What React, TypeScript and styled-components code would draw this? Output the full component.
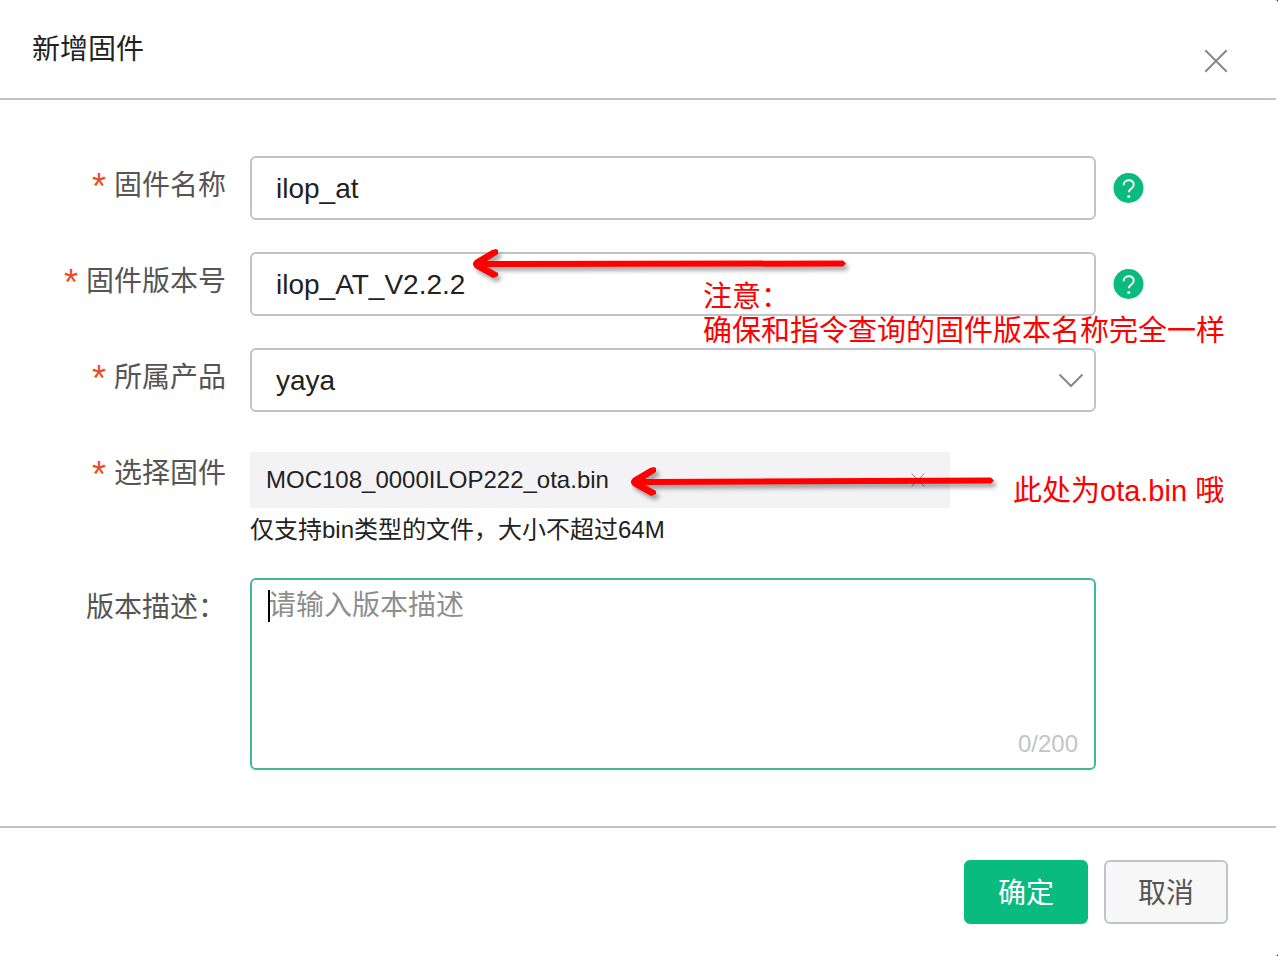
import React, { useState } from 'react';
import styled, { createGlobalStyle } from 'styled-components';

const line = '#bfc3cb';
const green = '#0abb80';
const ink = '#222';

const GlobalStyle = createGlobalStyle`
  *, *::before, *::after { box-sizing: border-box; }
  body {
    margin: 0;
    background: #333;
    color: ${ink};
    font-family: "Liberation Sans", "Noto Sans CJK SC", sans-serif;
    font-size: 28px;
    font-weight: 400;
  }
  button, input, select, textarea { font: inherit; color: inherit; }
`;

const Dialog = styled.form`
  min-height: 100vh;
  background: #fff;
  border-right: 2px solid #fff;
  border-radius: 0 3px 3px 0;
`;

const Header = styled.header`
  display: flex;
  justify-content: space-between;
  align-items: flex-start;
  height: 100px;
  padding: 30px 48px 0 32px;
  border-bottom: 2px solid ${line};
`;

const Title = styled.h1`
  margin: 0;
  font-size: 28px;
  font-weight: 400;
  line-height: 40px;
`;

const IconButton = styled.button`
  display: flex;
  padding: 0;
  border: 0;
  background: none;
  color: #888;
  cursor: pointer;
`;

const CloseButton = styled(IconButton)`
  margin-top: 19px;
`;

const Body = styled.main`
  display: flex;
  flex-direction: column;
  gap: 32px;
  padding: 56px 0;
`;

const Row = styled.div`
  display: flex;
  align-items: flex-start;
`;

const Label = styled.label`
  flex: none;
  width: 226px;
  margin-right: 24px;
  text-align: right;
  line-height: 60px;
  color: #555;
`;

const Required = styled.span`
  margin-right: 8px;
  color: #f04a25;
  font-size: 36px;
  line-height: 1;
  vertical-align: -4px;
`;

const Field = styled.div`
  position: relative;
  flex: 1;
  min-width: 0;
`;

const Aside = styled.div`
  flex: none;
  display: flex;
  align-items: center;
  width: 180px;
  height: 64px;
  padding-left: 17px;
`;

const TextInput = styled.input`
  display: block;
  width: 100%;
  height: 64px;
  padding: 2px 24px 0;
  border: 2px solid ${line};
  border-radius: 6px;
  outline: none;
  background: #fff;
  text-rendering: optimizeLegibility;
  font-kerning: normal;
`;

const Select = styled.select`
  display: block;
  width: 100%;
  height: 64px;
  padding: 0 24px;
  border: 2px solid ${line};
  border-radius: 6px;
  outline: none;
  background: #fff;
  appearance: none;
`;

const SelectArrow = styled.svg`
  position: absolute;
  top: 24px;
  right: 12px;
  pointer-events: none;
`;

const FileChip = styled.div`
  display: flex;
  align-items: center;
  justify-content: space-between;
  max-width: 700px;
  height: 56px;
  margin-top: 8px;
  padding: 0 24px 0 16px;
  background: #f3f3f6;
  font-size: 24px;
`;

const Hint = styled.p`
  margin: 6px 0 0;
  font-size: 24px;
  line-height: 32px;
`;

const FileInput = styled.input`
  display: none;
`;

const TextArea = styled.textarea`
  display: block;
  width: 100%;
  height: 192px;
  padding: 6px 16px;
  border: 2px solid #3dbb94;
  border-radius: 6px;
  outline: none;
  resize: none;
  line-height: 40px;
  caret-color: transparent;
  &::placeholder { color: #8e8e8e; opacity: 1; }
`;

const Caret = styled.span`
  position: absolute;
  top: 12px;
  left: 18px;
  width: 2px;
  height: 32px;
  background: #000;
`;

const Counter = styled.span`
  position: absolute;
  right: 18px;
  bottom: 10px;
  font-size: 24px;
  line-height: 32px;
  color: #c4c4c4;
`;

const Footer = styled.footer`
  display: flex;
  justify-content: flex-end;
  gap: 16px;
  padding: 32px 48px;
  border-top: 2px solid ${line};
`;

const Button = styled.button<{ $primary?: boolean }>`
  width: 124px;
  height: 64px;
  padding: 0 0 2px;
  border: 2px solid ${(p) => (p.$primary ? green : line)};
  border-radius: 6px;
  background: ${(p) => (p.$primary ? green : '#f7f7f7')};
  color: ${(p) => (p.$primary ? '#fff' : '#555')};
  cursor: pointer;
`;

const Note = styled.div<{ $x: number; $y: number }>`
  position: absolute;
  z-index: 2;
  left: ${(p) => p.$x}px;
  top: ${(p) => p.$y}px;
  color: #f00;
  font-size: 29px;
  line-height: 34px;
  white-space: nowrap;
  pointer-events: none;
`;

const ArrowSvg = styled.svg<{ $x: number; $y: number }>`
  position: absolute;
  z-index: 2;
  left: ${(p) => p.$x}px;
  top: ${(p) => p.$y}px;
  overflow: visible;
  pointer-events: none;
  filter: drop-shadow(3px 4px 2px rgba(0, 0, 0, 0.35));
`;

const Arrow = ({ x, y, length, rise }: { x: number; y: number; length: number; rise: number }) => (
  <ArrowSvg $x={x} $y={y} width={length} height="30" fill="#f00" aria-hidden="true">
    <path
      d={`M0 14 L2 11 L19 1 L23 0 L25 1 V5 L14 12 L${length - 3} ${11.5 - rise} L${length} ${14.5 - rise} L${length - 3} ${17.5 - rise} L14 18 L25 24 V27 L20 29 L2 19 L0 16 Z`}
    />
  </ArrowSvg>
);

const Cross = ({ size, weight }: { size: number; weight: number }) => (
  <svg width={size} height={size} viewBox={`0 0 ${size} ${size}`} fill="none" stroke="currentColor" strokeWidth={weight}>
    <path d={`M2 2 L${size - 2} ${size - 2} M${size - 2} 2 L2 ${size - 2}`} strokeLinecap="square" />
  </svg>
);

const HelpIcon = () => (
  <IconButton type="button" aria-label="帮助">
    <svg width="31" height="31" viewBox="0 0 31 31" fill="none">
      <circle cx="15.5" cy="15" r="15" fill={green} />
      <path
        d="M10.6 12.2c0-3 2.1-5 5-5 3 0 5.1 1.8 5.1 4.600 0 2-1 3-2.700 4.100-1.700 1.100-2.200 1.800-2.200 3.400"
        stroke="#fff"
        strokeWidth="1.9"
      />
      <circle cx="15.8" cy="23.5" r="1.5" fill="#fff" />
    </svg>
  </IconButton>
);

export default function App() {
  const [description, setDescription] = useState('');
  return (
    <>
      <GlobalStyle />
      <Dialog onSubmit={(e) => e.preventDefault()}>
        <Header>
          <Title>新增固件</Title>
          <CloseButton type="button" aria-label="关闭">
            <Cross size={24} weight={2} />
          </CloseButton>
        </Header>
        <Body>
          <Row>
            <Label htmlFor="name"><Required>*</Required>固件名称</Label>
            <Field><TextInput id="name" defaultValue="ilop_at" /></Field>
            <Aside><HelpIcon /></Aside>
          </Row>
          <Row>
            <Label htmlFor="version"><Required>*</Required>固件版本号</Label>
            <Field>
              <TextInput id="version" defaultValue="ilop_AT_V2.2.2" />
              <Arrow x={223} y={-3} length={373} rise={0} />
              <Note $x={453} $y={28}>注意：<br />确保和指令查询的固件版本名称完全一样</Note>
            </Field>
            <Aside><HelpIcon /></Aside>
          </Row>
          <Row>
            <Label htmlFor="product"><Required>*</Required>所属产品</Label>
            <Field>
              <Select id="product"><option>yaya</option></Select>
              <SelectArrow width="26" height="18" fill="none" stroke="#888" strokeWidth="2" aria-hidden="true">
                <path d="M1.5 2.5 L13 14 L24.5 2.5" />
              </SelectArrow>
            </Field>
            <Aside />
          </Row>
          <Row>
            <Label htmlFor="file"><Required>*</Required>选择固件</Label>
            <Field>
              <FileInput id="file" type="file" accept=".bin" />
              <FileChip>
                <span>MOC108_0000ILOP222_ota.bin</span>
                <IconButton type="button" aria-label="移除文件"><Cross size={16} weight={1} /></IconButton>
              </FileChip>
              <Hint>仅支持bin类型的文件，大小不超过64M</Hint>
              <Arrow x={381} y={23} length={363} rise={1} />
              <Note $x={763} $y={30}>此处为ota.bin 哦</Note>
            </Field>
            <Aside />
          </Row>
          <Row>
            <Label htmlFor="description">版本描述：</Label>
            <Field>
              <TextArea
                id="description"
                placeholder="请输入版本描述"
                maxLength={200}
                value={description}
                onChange={(e) => setDescription(e.target.value)}
              />
              {description === '' && <Caret />}
              <Counter>{description.length}/200</Counter>
            </Field>
            <Aside />
          </Row>
        </Body>
        <Footer>
          <Button type="submit" $primary>确定</Button>
          <Button type="button">取消</Button>
        </Footer>
      </Dialog>
    </>
  );
}
